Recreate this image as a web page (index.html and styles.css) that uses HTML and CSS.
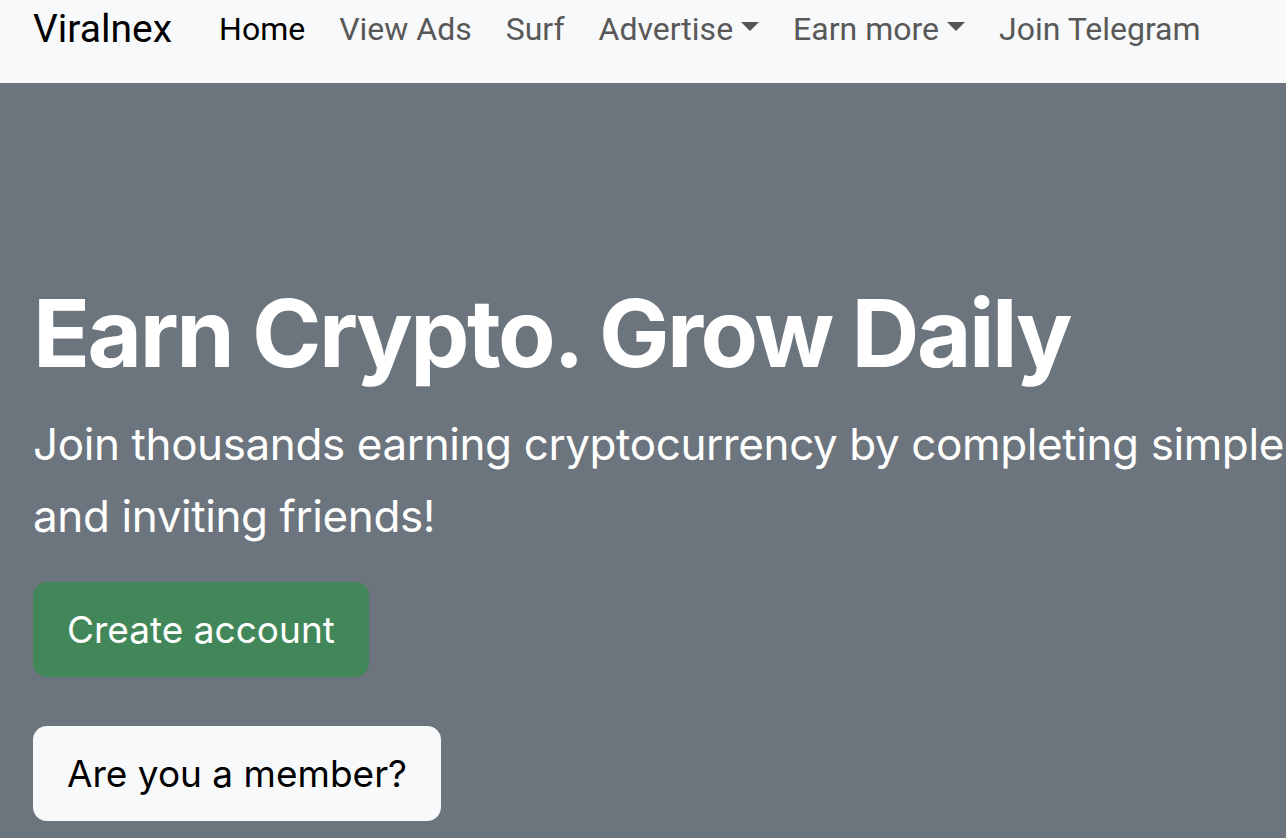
FILE: index.html
```html
<!DOCTYPE html>
<html lang="en">
<head>
<meta charset="utf-8">
<title>Viralnex</title>
<link rel="stylesheet" href="styles.css">
</head>
<body>
<nav class="navbar">
  <a class="brand" href="#">Viralnex</a>
  <ul class="nav">
    <li><a class="nav-link active" href="#">Home</a></li>
    <li><a class="nav-link" href="#">View Ads</a></li>
    <li><a class="nav-link" href="#">Surf</a></li>
    <li><a class="nav-link dropdown" href="#">Advertise<span class="caret"></span></a></li>
    <li><a class="nav-link dropdown" href="#">Earn more<span class="caret"></span></a></li>
    <li><a class="nav-link" href="#">Join Telegram</a></li>
  </ul>
</nav>
<section class="hero">
  <h1 class="hero-title">Earn Crypto. Grow Daily</h1>
  <p class="hero-lead">Join thousands earning cryptocurrency by completing simple tasks and inviting friends!</p>
  <div class="hero-actions">
    <a class="btn btn-success" href="#">Create account</a>
    <a class="btn btn-light" href="#">Are you a member?</a>
  </div>
</section>
</body>
</html>
```
FILE: styles.css
```css
* { box-sizing: border-box; }
html, body { margin: 0; padding: 0; }
body {
  width: 1286px;
  height: 838px;
  overflow: hidden;
  background: #6c757d;
  font-family: Inter, "Liberation Sans", sans-serif;
}
a { text-decoration: none; }

.navbar {
  height: 83px;
  background: #f8f9fa;
  display: flex;
  align-items: center;
  padding: 0 0 26px 33px;
}
.brand {
  font-family: Roboto, "Liberation Sans", sans-serif;
  font-size: 39px;
  color: #000;
  margin-right: 30px;
  line-height: 1;
  padding-top: 2px;
}
.nav {
  list-style: none;
  margin: 0;
  padding: 0;
  display: flex;
  align-items: center;
}
.nav-link {
  display: flex;
  align-items: center;
  font-family: Roboto, "Liberation Sans", sans-serif;
  font-size: 32px;
  color: #585858;
  padding: 0 17px;
  line-height: 1;
}
.nav-link.active { color: #000; }
.caret {
  display: inline-block;
  width: 0;
  height: 0;
  margin-left: 8px;
  border-left: 9px solid transparent;
  border-right: 9px solid transparent;
  border-top: 9px solid #555;
  margin-top: -4px;
}

.hero {
  padding: 0 0 0 33px;
  color: #fff;
  overflow: hidden;
}
.hero-title {
  margin: 0;
  padding-top: 194px;
  font-size: 94px;
  font-weight: 700;
  line-height: 1.2;
  letter-spacing: -2.5px;
  white-space: nowrap;
}
.hero-lead {
  margin: 18px 0 0 0;
  font-size: 44px;
  line-height: 72px;
  letter-spacing: -0.4px;
  width: 1400px;
}
.hero-actions {
  margin-top: 30px;
  display: flex;
  flex-direction: column;
  align-items: flex-start;
  gap: 49px;
}
.btn {
  display: inline-flex;
  align-items: center;
  height: 95px;
  padding: 0 34px;
  border-radius: 14px;
  font-size: 37px;
}
.btn-success { background: #41875a; color: #fff; }
.btn-light { background: #f8f9fa; color: #000; }
```
